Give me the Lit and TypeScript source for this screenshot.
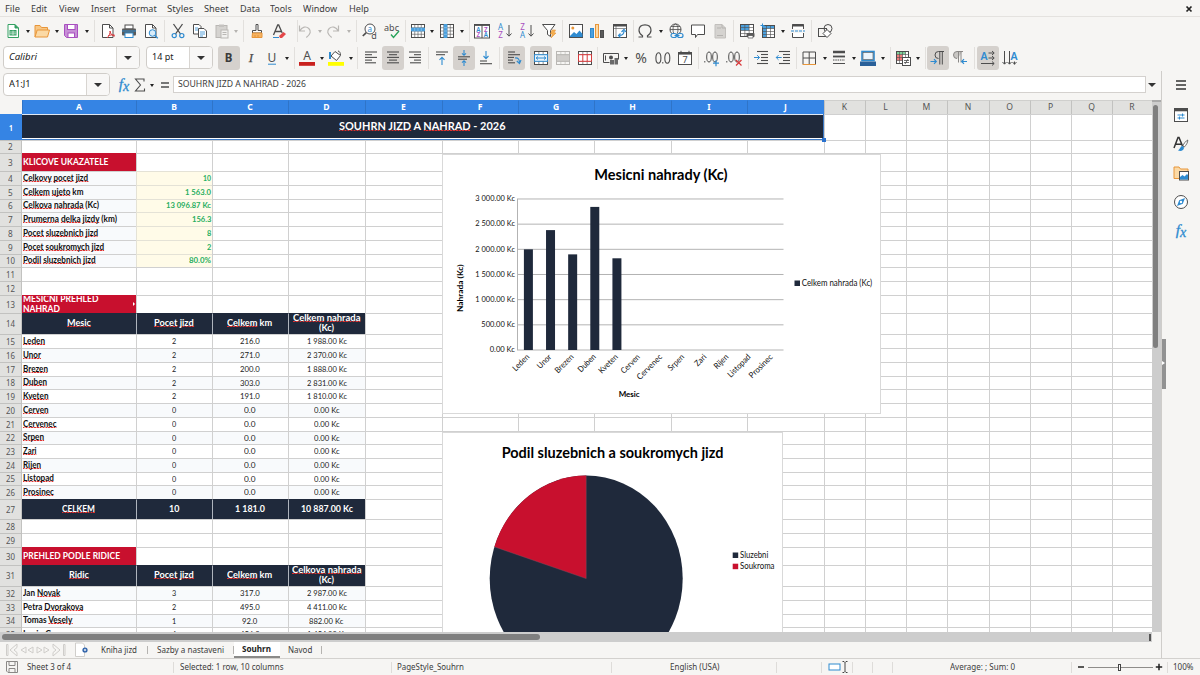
import { LitElement, html, svg, css, nothing, TemplateResult } from "lit";
import { customElement, property } from "lit/decorators.js";

/* One line of text squeezed or stretched to a given width. "~" marks a misspelled word. */
@customElement("fit-text")
class FitText extends LitElement {
  @property() text = "";
  @property({ type: Number }) w = 0;
  static styles = css`
    :host { display: inline-block; white-space: pre; flex: none; }
    .in { display: inline-block; transform-origin: 0 50%; }
    .bad { background: repeating-linear-gradient(90deg, #e0312f 0 1.500px, rgba(224, 49, 47, 0.45) 1.500px 3px) 0 calc(50% + 0.46em) / 100% 1px no-repeat; }
  `;
  firstUpdated() {
    const el = this.renderRoot.querySelector(".in") as HTMLElement;
    const n = el.getBoundingClientRect().width;
    this.style.width = this.w + "px";
    if (n && this.w) el.style.transform = `scaleX(${this.w / n})`;
  }
  render() {
    const words = this.text.split(" ");
    return html`<span class="in">${words.map((s, i) => html`${i ? " " : ""}${s[0] === "~" ? html`<span class="bad">${s.slice(1)}</span>` : s}`)}</span>`;
  }
}

const D = "#4d4d4d", B = "#2f8bd0", O = "#e8963a", P = "#a94fc0", G = "#b9b7b4", R = "#d8383a";
const grid = (x: number, y: number, w: number, h: number, n: number, m: number, c = D) => svg`
  <rect x=${x} y=${y} width=${w} height=${h} fill="none" stroke=${c}/>
  ${Array.from({ length: n - 1 }, (_, i) => svg`<path d=${`M${x + (w / n) * (i + 1)} ${y}v${h}`} stroke=${c} stroke-width=".6"/>`)}
  ${Array.from({ length: m - 1 }, (_, i) => svg`<path d=${`M${x} ${y + (h / m) * (i + 1)}h${w}`} stroke=${c} stroke-width=".6"/>`)}`;
const white = svg`<rect x="1.500" y="1.500" width="13" height="13" fill="#fff"/>`;
const lines = (ys: number[][], c = D) => svg`${ys.map(([y, a, b]) => svg`<path d=${`M${a} ${y}H${b}`} stroke=${c} stroke-width="1.1"/>`)}`;
const ch = (t: string, x: number, y: number, s: number, c = D, extra = "") =>
  svg`<text x=${x} y=${y} font-size=${s} fill=${c} text-anchor="middle" style=${"font-family:'Noto Sans',sans-serif;" + extra}>${t}</text>`;
const fx = svg`<text x="8" y="12.200" font-size="15.500" fill="#2f8bd0" stroke="#2f8bd0" stroke-width=".3" text-anchor="middle" style="font-family:'Liberation Serif',serif;font-style:italic">f<tspan dy="1.500" font-size="14">x</tspan></text>`;

const icons: Record<string, TemplateResult> = {
  new: svg`<path d="M3 1.5h7l3.5 3.500v9.500h-10.500z" fill="#fff" stroke="#35a063"/><path d="M10 1.500v3.500h3.500" fill="#35a063" stroke="#35a063"/><rect x="4.500" y="7" width="7" height="5.500" fill="#35a063"/><path d="M5 9h6M5 10.800h6M8 7.500v4.500" stroke="#fff" stroke-width=".6"/>`,
  open: svg`<path d="M1 14V2.500h5l1.500 2h6V7" fill="#f8c784" stroke=${O}/><path d="M1 14L3.200 7h12.300L13.500 14z" fill="#fbd9a5" stroke=${O}/>`,
  save: svg`<path d="M1.500 1.500h13v13h-11l-2-2z" fill="#c78fd6" stroke=${P}/><rect x="4.500" y="1.500" width="7.500" height="5" fill="#fff" stroke=${P}/><rect x="5" y="10" width="6.500" height="4.500" fill="#fff" stroke=${P}/>`,
  pdf: svg`<path d="M2.500 1.500h7l3.500 3.500v9.500h-10.500z" fill="#fff" stroke=${D}/><path d="M9.500 1.500v3.500h3.500" fill="none" stroke=${D}/><path d="M7 15c2-2 3.500-5 3-7M10 8c.5 3 2 5 5 5M8 13c2-1 4-1.500 6.500-1" fill="none" stroke=${R}/>`,
  print: svg`<rect x="4" y="2" width="8" height="4" fill="#fff" stroke=${D}/><rect x="1" y="5.500" width="14" height="7" rx="1" fill="#5a5a5a"/><path d="M1 8h14" stroke=${B}/><rect x="4" y="10" width="8" height="4.500" fill="#fff" stroke=${B}/>`,
  preview: svg`<path d="M2.500 1.500h7l3.500 3.500v9.500h-10.500z" fill="#fff" stroke=${D}/><path d="M9.500 1.500v3.500h3.500" fill="none" stroke=${D}/><circle cx="9.500" cy="10" r="3.300" fill="#d9ecf9" stroke=${B}/><path d="M11.800 12.500l3 2.800" stroke=${B} stroke-width="1.400"/>`,
  cut: svg`<path d="M3.500 1l7 10M12.500 1l-7 10" stroke=${D} stroke-width="1.300"/><circle cx="4.200" cy="12.600" r="2.100" fill="none" stroke=${B} stroke-width="1.200"/><circle cx="11.800" cy="12.600" r="2.100" fill="none" stroke=${B} stroke-width="1.200"/>`,
  copy: svg`<path d="M1.500 1.500h5.500l2 2v7.500h-7.500z" fill="#fff" stroke=${D}/><path d="M6.500 5.500h5.500l2.500 2.500v6.500h-8z" fill="#fff" stroke=${D}/><path d="M3 5h3M3 7h3M8 9h5M8 11h5M8 13h3" stroke=${B} stroke-width=".8"/>`,
  paste: svg`<rect x="2" y="2.500" width="11" height="12" fill="#d5d3d0" stroke=${G}/><rect x="5" y="1.500" width="5" height="2.500" fill="#c4c2bf"/><rect x="7" y="7" width="7" height="8" fill="#f2f1ef" stroke=${G}/><path d="M8.500 9.500h4M8.500 11.500h4" stroke=${G}/>`,
  clone: svg`<path d="M7 1.500h2v6h3.500v2.500h-9V7.500H7z" fill="#fff" stroke=${D}/><path d="M3.500 10h9.500v4.500H3z" fill="#f5b363" stroke=${O}/><path d="M6 14v-2M9 14v-2" stroke=${O}/>`,
  clear: svg`<path d="M2.500 12L6.700 2h1l3.500 8M4 8.500h6" fill="none" stroke=${D} stroke-width="1.300"/><path d="M2 14.500h6" stroke=${B}/><path d="M8 13l4.500-4 2.500 2-4 4H9z" fill="#e4484a"/>`,
  undo: svg`<path d="M2.500 2.500v5.500h5.500M2.800 8c2-4.500 6.500-5 9-2.500s2 5.500-2.500 9" fill="none" stroke=${G} stroke-width="1.200"/>`,
  redo: svg`<path d="M13.500 2.500v5.500h-5.500M13.200 8c-2-4.500-6.500-5-9-2.500s-2 5.500 2.500 9" fill="none" stroke=${G} stroke-width="1.200"/>`,
  find: svg`<circle cx="8" cy="6" r="5" fill="#fff" stroke=${D}/><path d="M4.300 9.600L.8 13" stroke=${D} stroke-width="1.700"/>${ch("a", 7.800, 8.500, 8, B)}${ch("d", 12, 15.500, 9)}`,
  spell: svg`${ch("abc", 7.500, 7.500, 9)}<path d="M7 11.500l2.500 3L15 8" fill="none" stroke="#27a35a" stroke-width="1.400"/>`,
  row: svg`${white}${grid(1.5, 1.5, 13, 13, 4, 4)}<rect x="1" y="4.700" width="14" height="3.600" fill="#4a9fdc"/><path d="M4.700 4.700v3.600M8 4.700v3.600M11.300 4.700v3.600" stroke="#9fd0f2" stroke-width=".6"/>`,
  col: svg`${white}${grid(1.5, 1.5, 13, 13, 4, 4)}<rect x="4.700" y="1" width="3.600" height="14" fill="#4a9fdc"/><path d="M4.700 4.700h3.600M4.700 8h3.600M4.700 11.300h3.600" stroke="#9fd0f2" stroke-width=".6"/>`,
  sort: svg`<rect x=".5" y="1.500" width="15" height="13.500" fill="#fff" stroke=${D}/><path d="M.5 2h15" stroke=${D} stroke-width="1.800"/><path d="M8 2v13" stroke=${D}/>${ch("A", 4.300, 8.600, 6.200, B, "font-weight:600")}${ch("Z", 4.300, 14.300, 6.200, P, "font-weight:600")}${ch("Z", 11.800, 8.600, 6.200, P, "font-weight:600")}${ch("A", 11.800, 14.300, 6.200, B, "font-weight:600")}`,
  asc: svg`${ch("A", 3.500, 7, 8, B)}${ch("Z", 3.500, 15, 8, P)}<path d="M12 2v11M9.500 10.500L12 13.200l2.500-2.700" fill="none" stroke=${D}/>`,
  desc: svg`${ch("Z", 3.500, 7, 8, P)}${ch("A", 3.500, 15, 8, B)}<path d="M12 2v11M9.500 10.500L12 13.200l2.500-2.700" fill="none" stroke=${D}/>`,
  filter: svg`<path d="M1.500 1.500h12.500L9.500 7.500v6l-3-2v-4z" fill="#fff" stroke=${D}/><path d="M11 7h3.500l-1.500 3h2l-5 5 1.500-4H9.500z" fill="#f5b04f" stroke=${O} stroke-width=".6"/>`,
  image: svg`<rect x="1.500" y="1.500" width="13" height="13" fill="#fff" stroke=${D}/><circle cx="4.800" cy="5" r="1.500" fill=${O}/><path d="M2 13l4-4 2.500 2 3-3.500 3 3.500v3H2z" fill=${B}/>`,
  chart: svg`<rect x="1.500" y="5.500" width="3" height="9" fill="#4ca0de" stroke=${B}/><rect x="6.500" y="1.500" width="3" height="13" fill="#fbd9a5" stroke=${O}/><rect x="11.500" y="7.500" width="3" height="7" fill="#5a5a5a" stroke=${D}/>`,
  pivot: svg`<rect x="1.500" y="1.500" width="13" height="13" fill="#fff" stroke=${D}/><path d="M1.500 2.500h13" stroke=${D} stroke-width="2"/><path d="M4 2v12.500M1.500 5.500h13" stroke=${D} stroke-width=".6"/><path d="M12 8c0 3-2 4.500-5 4.500M9.500 9L12 6.500l2 2.500M8.500 10.500L6.500 12.500l2 2" fill="none" stroke=${B} stroke-width="1.200"/>`,
  omega: svg`<path d="M1.500 14h4v-1.300C3.200 11.300 2 9.500 2 7.300 2 3.800 4.500 1.800 8 1.800s6 2 6 5.500c0 2.200-1.200 4-3.500 5.400V14h4" fill="none" stroke=${D} stroke-width="1.200"/>`,
  link: svg`<circle cx="7.500" cy="6.500" r="5.500" fill="none" stroke=${D}/><ellipse cx="7.500" cy="6.500" rx="2.500" ry="5.500" fill="none" stroke=${D} stroke-width=".8"/><path d="M2 6.500h11M3 3.500h9" stroke=${D} stroke-width=".8"/><rect x="3" y="10.500" width="5.500" height="4" rx="2" fill="#f5f4f2" stroke=${B} stroke-width="1.200"/><rect x="9.500" y="10.500" width="5.500" height="4" rx="2" fill="#f5f4f2" stroke=${B} stroke-width="1.200"/><path d="M6.500 12.500h5" stroke=${B}/>`,
  comment: svg`<path d="M1.500 2h13v9.500H7.500L5.500 14.500v-3h-4z" fill="#fff" stroke=${D}/>`,
  hf: svg`<path d="M3 1.500h7l3.500 3.500v10H3z" fill="#d5d3d0" stroke="#c2c0bd"/><path d="M10 1.500V5h3.500M5 5h4M5 12.500h6" fill="none" stroke="#b5b3b0"/>`,
  parea: svg`<rect x="1.500" y="1.500" width="13" height="12" fill="#fff"/><rect x="1" y="1" width="9" height="6.500" fill="#4a9fdc"/>${grid(1.5, 1.5, 13, 12, 3, 4)}<rect x="7.500" y="10" width="8" height="4" rx=".8" fill="#5a5a5a"/><path d="M9 12.500h5v2.500H9z" fill="#fff" stroke=${D} stroke-width=".7"/>`,
  freeze: svg`<rect x="2.500" y="2.500" width="12" height="12" fill="#fff"/><rect x="2" y="2" width="13" height="3.500" fill="#4a9fdc"/><rect x="2" y="2" width="4.500" height="13" fill="#4a9fdc"/>${grid(2.5, 2.5, 12, 12, 3, 4)}<path d="M.5 2.500h4M2.500.5v4" stroke=${B}/>`,
  split: svg`<path d="M2.500 6V1.500h11V6M2.500 10v4.500h11V10" fill="#fff" stroke=${D}/><path d="M2 2.500h12" stroke=${D} stroke-width="2"/><path d="M1 8h14" stroke=${B} stroke-dasharray="3 1"/>`,
  shapes: svg`<rect x="1.500" y="5.500" width="8" height="8" fill="none" stroke=${D}/><circle cx="11" cy="5.500" r="4" fill="none" stroke=${D}/><path d="M10 6.500l4 4-4 4-4-4z" fill="#fff" stroke=${D}/>`,
  bold: svg`${ch("B", 7.500, 12, 11.500, "#3a3a3a", "font-weight:700")}`,
  italic: svg`<text x="8" y="12" font-size="13" fill=${D} stroke=${D} stroke-width=".25" text-anchor="middle" style="font-family:'Liberation Serif',serif;font-style:italic">I</text>`,
  under: svg`${ch("U", 8, 11.500, 12)}<path d="M4 14.200h8" stroke=${B}/>`,
  fcolor: svg`${ch("A", 8, 10.300, 12)}<rect x="0" y="12" width="16" height="3.800" fill="#c9211e"/>`,
  fill: svg`<rect x="0" y="12" width="16" height="3.800" fill="#ffff00"/><path d="M3 6l4-4.500 5.500 4-4 5z" fill="#fff" stroke=${D}/><path d="M2 2v7" stroke=${B} stroke-width="2"/><path d="M10 1c1.500 0 2.500 2 2.500 4" fill="none" stroke=${D}/>`,
  left: lines([[2, 2, 14], [4.700, 2, 9], [7.400, 2, 14], [10.100, 2, 9], [12.800, 2, 13]]),
  center: lines([[2, 2, 14], [4.700, 4, 12], [7.400, 2, 14], [10.100, 4, 12], [12.800, 2, 14]]),
  right: lines([[2, 2, 14], [4.700, 7, 14], [7.400, 2, 14], [10.100, 7, 14], [12.800, 3, 14]]),
  top: svg`${lines([[2, 2, 14], [4.700, 2, 11]])}<path d="M8 15V7.500M5.500 9.800L8 7.200l2.500 2.600" fill="none" stroke=${B} stroke-width="1.100"/>`,
  mid: svg`${lines([[6.800, 2, 14], [9.200, 2, 11]])}<path d="M8 0v5M6 3.300l2 2 2-2M8 16v-5M6 12.700l2-2 2 2" fill="none" stroke=${B} stroke-width="1.100"/>`,
  bot: svg`${lines([[11, 2, 9], [13.700, 2, 14]])}<path d="M8 1v7.500M5.500 6L8 8.600 10.500 6" fill="none" stroke=${B} stroke-width="1.100"/>`,
  wrap: svg`${lines([[2, 2, 9], [4.700, 2, 14], [7.400, 2, 8], [10.100, 2, 7], [12.800, 2, 9]])}<path d="M9 8c3-.5 4.500 1.500 4.500 4.500M10.800 11l2.700 2.500 1.500-3.500" fill="none" stroke=${B} stroke-width="1.100"/>`,
  merge: svg`${white}${grid(1.5, 1.5, 13, 13, 3, 4)}<rect x="1.500" y="4.700" width="13" height="6.600" fill="#e7f3fc" stroke=${B}/><path d="M3 8h10M5 6.500L3.200 8 5 9.500M11 6.500L12.800 8 11 9.500" fill="none" stroke=${B}/>`,
  merge2: svg`${grid(1.5, 1.5, 13, 13, 3, 4, G)}<rect x="1.500" y="4.700" width="13" height="6.600" fill="#d0cecb" stroke=${G}/>`,
  unmerge: svg`${white}${grid(1.5, 1.5, 13, 13, 3, 4)}<path d="M1.500 4.700h13v6.600h-13zM5.800 4.700v6.600M10.200 4.700v6.600" fill="#fff" stroke=${R}/>`,
  money: svg`<path d="M.5 3.500h15v6M.5 3.500v9h6" fill="none" stroke=${D}/><circle cx="8" cy="7.500" r="2" fill=${D}/><path d="M7 10h4v4.500H7zM11.500 8h3.500v6.500h-3.500z" fill="#6a6a6a"/><path d="M2.500 5.500v5" stroke=${D}/>`,
  pct: svg`${ch("%", 8, 12.800, 14, D)}`,
  num: svg`<g fill="none" stroke=${D} stroke-width="1.100"><ellipse cx="3.400" cy="8" rx="2.500" ry="5.200"/><ellipse cx="12.300" cy="8" rx="2.500" ry="5.200"/></g><path d="M7.800 12v1.500" stroke=${D}/>`,
  date: svg`<rect x="1.500" y="2.500" width="13" height="12" fill="#fff" stroke=${D}/><path d="M1.500 3.500h13" stroke=${D} stroke-width="2.200"/><path d="M4 .8v2M12 .8v2" stroke=${D}/>${ch("7", 8, 13, 9)}`,
  add: svg`<g fill="none" stroke=${D}><ellipse cx="5" cy="7" rx="2.300" ry="5"/><ellipse cx="11" cy="7" rx="2.300" ry="5"/></g><path d="M.8 11v1.500" stroke=${D}/><path d="M12 10.200v6M9 13.200h6" stroke=${B} stroke-width="1.200"/>`,
  del: svg`<g fill="none" stroke=${D}><ellipse cx="5" cy="7" rx="2.300" ry="5"/><ellipse cx="11" cy="7" rx="2.300" ry="5"/></g><path d="M.8 11v1.500" stroke=${D}/><path d="M10 10l5.500 5.500M15.500 10L10 15.500" stroke=${R} stroke-width="1.200"/>`,
  indent: svg`${lines([[1.500, 4, 15], [4.500, 8, 15], [7.500, 8, 15], [10.500, 8, 15], [13.500, 4, 15]])}<path d="M1 7.500h5.500M4.200 5.200l2.300 2.300-2.300 2.300" fill="none" stroke=${B}/>`,
  outdent: svg`${lines([[1.500, 4, 15], [4.500, 8, 15], [7.500, 8, 15], [10.500, 8, 15], [13.500, 4, 15]])}<path d="M1.200 7.500h5.500M3.500 5.200L1.200 7.500l2.300 2.300" fill="none" stroke=${B}/>`,
  borders: svg`<path d="M2 2h12.500v12M2 2v12M8.200 2v12M2 8h12.500" fill="none" stroke=${D}/><path d="M1.500 14.500h13.500" stroke=${O}/>`,
  lstyle: svg`<path d="M2 2h12" stroke=${D} stroke-width="2.500"/><path d="M2 6.500h12" stroke=${D} stroke-width="1.800"/><path d="M2 10h12" stroke=${D} stroke-dasharray="1.500 .8"/><path d="M2 13.500h12" stroke=${D}/>`,
  bcolor: svg`<rect x="2" y="1.500" width="12" height="9" fill="#eaf4fc" stroke=${B} stroke-width="1.600"/><rect x="3" y="2.500" width="10" height="7" fill="none" stroke=${D} stroke-width=".6"/><rect x="0" y="11.500" width="16" height="4.500" fill="#2a6099"/>`,
  cond: svg`<rect x="1.500" y="1.500" width="12" height="12" fill="#fff"/><rect x="1.500" y="1.500" width="9" height="3" fill="#7fd09a"/><rect x="1.500" y="4.500" width="6" height="6" fill="#f07c7c"/>${grid(1.5, 1.5, 12, 12, 4, 4)}<rect x="7.500" y="7.500" width="8" height="8" fill="#fff" stroke=${D}/><path d="M9 10.500h5M9 12.500h5M13 9l-3 5" stroke=${D} stroke-width=".8"/>`,
  ltr: svg`<path d="M14 1.500H8.500a3.500 3.500 0 0 0 0 7M9.800 1.500v13M12.300 1.500v13" fill="none" stroke=${D}/><path d="M.5 11.500h5.500M4 9.200l2.300 2.300L4 13.800" fill="none" stroke=${B} stroke-width="1.200"/>`,
  rtl: svg`<path d="M10 1.500H5a3.500 3.500 0 0 0 0 7h1z" fill="#c9c7c4"/><path d="M11 1.500H5a3.500 3.500 0 0 0 0 7M6.500 1.500v11M9 1.500v11" fill="none" stroke="#8a8886"/><path d="M9.500 11.500H15M12 9.200l-2.300 2.300 2.300 2.300" fill="none" stroke=${B} stroke-width="1.200"/>`,
  tdir: svg`${ch("A", 4, 10, 10.500, B, "font-weight:600")}<path d="M8.500 3h5.500M8.500 8h5.500M1 13.500h13M12 1l2.200 2L12 5M12 6l2.200 2L12 10M12 11.500l2.200 2-2.200 2" fill="none" stroke=${D}/>`,
  vert: svg`${ch("A", 12, 10, 10.500, B, "font-weight:600")}<path d="M2.500 1v13M7.500 1v13M12.500 11.500v3M.5 12l2 2.200 2-2.200M5.500 12l2 2.200 2-2.200M10.500 12l2 2.200 2-2.200" fill="none" stroke=${D}/>`,
  fx,
  sigma: svg`<path d="M12 4.500V2H3.500L8.500 8l-5 6H12.500v-2.500" fill="none" stroke=${D} stroke-width="1.100"/>`,
  equal: svg`<path d="M4 6h8M4 10h8" stroke=${D} stroke-width="1.500"/>`,
  burger: svg`<path d="M3 4h10M3 8h10M3 12h10" stroke="#333" stroke-width="1.300"/>`,
  props: svg`<rect x="1.500" y="1.500" width="13" height="13" fill="#fff" stroke=${D}/><path d="M1.500 3h13" stroke=${D} stroke-width="2.600"/><path d="M4.500 8h7M4.500 11h7M9.500 6.500v3M6.500 9.500v3" stroke=${B}/>`,
  styles: svg`<path d="M1 12L5 1.500h1L9.500 10M2.500 8.300h6" fill="none" stroke="#333" stroke-width="1.500"/><path d="M14.800 4c-2 1-4 3.500-5 6l1.500 1c2-2 3.500-4.500 3.500-7z" fill="#fff" stroke=${D} stroke-width=".8"/><path d="M9.500 10c-2 0-2 2.500-4.500 4.500 3 1 6 0 6-3z" fill=${B}/>`,
  gallery: svg`<path d="M1 13.500V2h5l1.500 2h7.500v9.500z" fill="#fbd9a5" stroke=${O}/><rect x="6.500" y="6.500" width="9" height="8.500" fill="#fff" stroke=${D}/><path d="M7 14.500V12l2.500-2 2 1.500L14 9l1 1v4.500z" fill=${B}/>`,
  nav: svg`<circle cx="8" cy="8" r="6.500" fill="#fff" stroke=${D}/><path d="M12 4l-2.200 5.800L4 12l2.200-5.800z" fill=${B}/><circle cx="8" cy="8" r="1.200" fill="#fff"/>`,
  addsheet: svg`<path d="M1.500 1h7l2 2v11.500h-9z" fill="#fff" stroke="#d0cecb"/><circle cx="11" cy="8" r="2.600" fill="#2a5fa8"/><path d="M9.800 8h2.400M11 6.800v2.400" stroke="#fff" stroke-width=".9"/>`,
  disk: svg`<path d="M2.500 2.500h11v11h-9.500l-1.500-1.500z" fill="none" stroke="#8a8886"/><path d="M5 2.500v4h6v-4M5 13.500v-4h6v4" fill="none" stroke="#8a8886"/>`,
  selbox: svg`<rect x="2" y="5" width="11" height="6" fill="#fff" stroke=${B}/>`,
  ibeam: svg`<path d="M5.500 2.500h1.500l1 1 1-1h1.500M8 3.500v9M5.500 13.500h1.500l1-1 1 1h1.500" fill="none" stroke="#333" stroke-width=".9"/>`,
  minus: svg`<path d="M5 8h6" stroke="#222" stroke-width="1.500"/>`,
  plus: svg`<path d="M4.800 8h6.400M8 4.800v6.400" stroke="#222" stroke-width="1.500"/>`,
  close: svg`<path d="M5.500 5.500l5 5M10.500 5.500l-5 5" stroke="#222" stroke-width="1.700"/>`,
};
const icon = (n: string) => html`<svg width="16" height="16" viewBox="0 0 16 16">${icons[n]}</svg>`;

type Item = { x: number; w: number; t: unknown; cls?: string };
const ic = (n: string, cx: number): Item => ({ x: cx - 8, w: 16, t: icon(n) });
const on = (n: string, cx: number): Item => ({ x: cx - 11, w: 22, t: icon(n), cls: "on" });
const ca = (cx: number, off = false): Item => ({ x: cx - 2.5, w: 5, t: html`<i class="caret ${off ? "off" : ""}"></i>` });
const big = (cx: number): Item => ({ x: cx - 4, w: 8, t: html`<i class="caret big"></i>` });
const se = (cx: number): Item => ({ x: cx - 0.5, w: 1, t: nothing, cls: "sep" });
const tx = (s: string, x: number, w: number): Item => ({ x, w, t: html`<fit-text .text=${s} .w=${w}></fit-text>` });
const strip = (items: Item[]) => {
  let end = 0;
  return items.map((i) => {
    const m = i.x - end;
    end = i.x + i.w;
    return html`<div class="item ${i.cls ?? ""}" style="margin-left:${m}px;width:${i.w}px">${i.t}</div>`;
  });
};

const menu = strip([
  tx("File", 5.3, 15), tx("Edit", 31.3, 16), tx("View", 58.8, 20.4), tx("Insert", 90.7, 24.5), tx("Format", 125.7, 30.7), tx("Styles", 166.7, 26.3),
  tx("Sheet", 204.2, 24.5), tx("Data", 239.7, 20), tx("Tools", 270.5, 21.7), tx("Window", 303.3, 34.2), tx("Help", 348.7, 20), ic("close", 1189.3),
]);
const bar1 = strip([
  ic("new", 12.5), ca(27.5), ic("open", 41.5), ca(57), ic("save", 71), ca(86.5), se(94), ic("pdf", 107.5), ic("print", 129), ic("preview", 151), se(164.5),
  ic("cut", 178), ic("copy", 200), ic("paste", 222), ca(236, true), se(243), ic("clone", 256.5), ic("clear", 278.5), se(297), ic("undo", 304.8), ca(319.5, true),
  ic("redo", 333), ca(349, true), se(356), ic("find", 370), ic("spell", 391.5), se(405), ic("row", 417.8), ca(432.5), ic("col", 447), ca(462), se(469.5),
  ic("sort", 482.3), ic("asc", 505), ic("desc", 527), ic("filter", 549), se(562.5), ic("image", 575.7), ic("chart", 597.5), ic("pivot", 620), se(633.5),
  ic("omega", 645.5), ca(661), ic("link", 676.5), ic("comment", 698.3), ic("hf", 720), se(733.5), ic("parea", 747), ic("freeze", 767.7), ca(783), ic("split", 798.5), se(812), ic("shapes", 825.5),
]);
const bar2 = strip([
  { x: 3, w: 136.5, cls: "combo", t: html`<div class="field ital"><fit-text .text=${"Calibri"} .w=${28}></fit-text></div><div class="drop"><i class="caret big"></i></div>` },
  { x: 145.5, w: 67, cls: "combo", t: html`<div class="field"><fit-text .text=${"14 pt"} .w=${21.5}></fit-text></div><div class="drop"><i class="caret big"></i></div>` },
  on("bold", 229), ic("italic", 251), ic("under", 272), ca(287), se(294), ic("fcolor", 306.5), ca(321.5), ic("fill", 335.8), ca(351), se(358),
  ic("left", 371.5), on("center", 393.5), ic("right", 415.5), se(429), ic("top", 442.5), on("mid", 464.5), ic("bot", 486.5), se(500), on("wrap", 513.7), on("merge", 541),
  ic("merge2", 563), ic("unmerge", 585), se(598), ic("money", 611), ca(626), ic("pct", 641.3), ic("num", 663.3), ic("date", 685.5), se(699), ic("add", 712), ic("del", 734.5), se(748.5),
  ic("indent", 761.5), ic("outdent", 783.5), se(797), ic("borders", 809.3), ca(825), ic("lstyle", 839), ca(854), ic("bcolor", 868), ca(883.5), se(890.5), ic("cond", 903), ca(918), se(925.5),
  on("ltr", 938.5), ic("rtl", 960.5), se(974.5), on("tdir", 988), ic("vert", 1009.7),
]);
const formula = strip([
  { x: 3, w: 107, cls: "combo", t: html`<div class="field"><fit-text .text=${"A1:J1"} .w=${21.5}></fit-text></div><div class="drop"><i class="caret big"></i></div>` },
  ic("fx", 124), ic("sigma", 140), ca(152), ic("equal", 165),
  { x: 173, w: 973, cls: "input", t: html`<fit-text .text=${"SOUHRN JIZD A NAHRAD - 2026"} .w=${128}></fit-text>` },
  big(1152),
]);
const status = strip([
  ic("disk", 12), tx("Sheet 3 of 4", 27.2, 44), se(173.5), tx("Selected: 1 row, 10 columns", 180, 103.5), se(391.5), tx("PageStyle_Souhrn", 397.3, 67), se(612), tx("English (USA)", 670.3, 49.5),
  se(776.5), se(821.5), ic("selbox", 835), { x: 843, w: 5, t: icon("ibeam") }, se(852.5), se(872.5), se(892.5), tx("Average: ; Sum: 0", 950.5, 65), se(1071.5),
  { x: 1077, w: 8, t: icon("minus") }, { x: 1088, w: 65, cls: "slider", t: html`<b></b>` }, { x: 1155.5, w: 8, t: icon("plus") }, se(1167.5), tx("100%", 1173, 20.5),
]);
const tabs = strip([
  { x: 5, w: 62, t: html`<svg width="62" height="16" viewBox="0 0 62 16" fill="none" stroke="#cfcdca"><path d="M1.500 2.500h1.500v11H1.500zM12 2L5 8l7 6v-3.500L9 8l3-2.500zM21 5l-5 3 5 3zM28 5l-5 3 5 3zM32 5l5 3-5 3zM39 5l5 3-5 3zM48 2l7 6-7 6v-3.500L51 8l-3-2.500zM58.500 2.500h1.500v11h-1.500z"/></svg>` },
  ic("addsheet", 81.5), tx("Kniha jizd", 101.3, 36), se(147.5), tx("Sazby a nastaveni", 157, 67), se(233.5),
  { x: 234, w: 46, cls: "tab", t: html`<fit-text .text=${"Souhrn"} .w=${29}></fit-text>` }, tx("Navod", 288.3, 24.3), se(321.5),
]);

const colX = [22, 136, 212, 288, 365, 442, 518, 594, 671, 747, 824, 865, 906, 947, 989, 1030, 1071, 1112, 1152];
const rowY = [114, 140, 153, 171, 185, 199, 212, 226, 240, 254, 267, 281, 295, 313, 334, 348, 362, 376, 389, 403, 417, 431, 444, 458, 472, 485, 499, 519, 533, 547, 565, 586, 600, 614, 627, 641];

type Cell = { cls: string; lines: [string, number][] };
const cells: Record<string, Cell> = {};
const put = (ref: string, cls: string, ...l: [string, number][]) => { cells[ref] = { cls, lines: l }; };
put("A3", "red", ["KLICOVE UKAZATELE", 85.5]);
([["~Celkovy ~pocet ~jizd", 65, "10", 8], ["~Celkem ~ujeto km", 60.5, "1 563.0", 26], ["~Celkova ~nahrada (Kc)", 76, "13 096.87 Kc", 45], ["~Prumerna ~delka ~jizdy (km)", 94, "156.3", 19.5],
  ["~Pocet ~sluzebnich ~jizd", 75, "8", 4.3], ["~Pocet ~soukromych ~jizd", 81, "2", 4.3], ["~Podil ~sluzebnich ~jizd", 72.5, "80.0%", 22]] as [string, number, string, number][])
  .forEach(([a, w, b, v], i) => { put("A" + (4 + i), "label tint", [a, w]); put("B" + (4 + i), "kpi", [b, v]); });
put("A13", "red more", ["MESICNI PREHLED", 75.5], ["NAHRAD", 37]);
const head = (r: number, a: [string, number], d: [string, number]) => {
  put("A" + r, "navy", a); put("B" + r, "navy sp", ["~Pocet ~jizd", 39.7]); put("C" + r, "navy sp", ["~Celkem km", 45.2]); put("D" + r, "navy sp", d, ["(Kc)", 15]);
};
head(14, ["~Mesic", 24], ["~Celkem ~nahrada", 67.5]);
([["Leden", 22, "2", "216.0", "1 988.00 Kc"], ["Unor", 18, "2", "271.0", "2 370.00 Kc"], ["Brezen", 25, "2", "200.0", "1 888.00 Kc"], ["Duben", 24, "2", "303.0", "2 831.00 Kc"], ["Kveten", 25.5, "2", "191.0", "1 810.00 Kc"],
  ["Cerven", 25.5, "0", "0.0", "0.00 Kc"], ["Cervenec", 33.5, "0", "0.0", "0.00 Kc"], ["Srpen", 21, "0", "0.0", "0.00 Kc"], ["Zari", 13.5, "0", "0.0", "0.00 Kc"], ["Rijen", 18, "0", "0.0", "0.00 Kc"],
  ["Listopad", 31, "0", "0.0", "0.00 Kc"], ["Prosinec", 31, "0", "0.0", "0.00 Kc"]] as [string, number, string, string, string][])
  .forEach(([n, w, b, c, d], i) => data(15 + i, "~" + n, w, b, c, d, i % 2 ? "tint" : ""));
put("A27", "navy tot", ["~CELKEM", 33]); put("B27", "navy sp tot", ["10", 10.3]); put("C27", "navy sp tot", ["1 181.0", 30]); put("D27", "navy sp tot", ["10 887.00 Kc", 52]);
put("A30", "red", ["PREHLED PODLE RIDICE", 97]);
head(31, ["~Ridic", 20], ["~Celkova ~nahrada", 69.5]);
([["Jan ~Novak", 37.3, "3", "317.0", "2 987.00 Kc"], ["Petra ~Dvorakova", 60.3, "2", "495.0", "4 411.00 Kc"], ["Tomas ~Vesely", 49.3, "1", "92.0", "882.00 Kc"], ["Lucie Cerna", 45, "4", "456.0", "1 454.00 Kc"]] as [string, number, string, string, string][])
  .forEach(([n, w, b, c, d], i) => data(32 + i, n, w, b, c, d, i % 2 ? "" : "tint"));
function data(r: number, n: string, w: number, b: string, c: string, d: string, tint: string) {
  put("A" + r, "label " + tint, [n, w]);
  put("B" + r, "num " + tint, [b, 4.2]);
  put("C" + r, "num " + tint, [c, c.length === 5 ? 19.8 : c.length === 4 ? 15.3 : 11.5]);
  put("D" + r, "num " + tint, [d, d.length === 11 ? 40 : d.length === 9 ? 34.3 : 25.7]);
}

@customElement("bar-chart")
class BarChart extends LitElement {
  static styles = css`
    :host { display: block; height: 100%; }
    svg { display: block; font-family: Lato, "Liberation Sans", sans-serif; }
  `;
  render() {
    const vals: [string, number, number][] = [["Leden", 1988, 20], ["Unor", 2370, 16.5], ["Brezen", 1888, 23], ["Duben", 2831, 21.5], ["Kveten", 1810, 23.5], ["Cerven", 0, 23.5], ["Cervenec", 0, 32], ["Srpen", 0, 19.5], ["Zari", 0, 13], ["Rijen", 0, 17], ["Listopad", 0, 29], ["Prosinec", 0, 30]];
    const ys: [string, number][] = [["0.00 Kc", 25.3], ["500.00 Kc", 33.7], ["1 000.00 Kc", 39.7], ["1 500.00 Kc", 39.7], ["2 000.00 Kc", 39.7], ["2 500.00 Kc", 39.7], ["3 000.00 Kc", 39.7]];
    return html`<svg width="437" height="258" viewBox="443 155 437 258">
      <text x="594.300" y="179.700" font-size="15" font-weight="700" textLength="133.300" lengthAdjust="spacingAndGlyphs">Mesicni nahrady (Kc)</text>
      ${ys.map(([t, w], i) => svg`<path d=${`M517 ${350 - i * 25.17}H783.500`} stroke="#b3b3b3"/>
        <text x=${515 - w} y=${352.3 - i * 25.17} font-size="8.300" fill="#111" textLength=${w} lengthAdjust="spacingAndGlyphs">${t}</text>`)}
      <path d="M517.500 199V350" stroke="#b3b3b3"/>
      ${vals.map(([t, v, w], i) => {
        const cx = 528.4 + i * 22.13;
        const h = (v * 151) / 3000 + 0.6;
        return svg`${v ? svg`<rect x=${cx - 4.5} y=${350 - h} width="9" height=${h} fill="#1f293b"/>` : nothing}
          <text transform=${`translate(${cx + 1.5} ${357.5}) rotate(-45)`} x=${-w} font-size="8.200" fill="#111" textLength=${w} lengthAdjust="spacingAndGlyphs">${t}</text>`;
      })}
      <text transform="translate(463 312) rotate(-90)" font-size="7.900" font-weight="700" textLength="47.500" lengthAdjust="spacingAndGlyphs">Nahrada (Kc)</text>
      <text x="618.700" y="397" font-size="8.200" font-weight="700" textLength="21" lengthAdjust="spacingAndGlyphs">Mesic</text>
      <rect x="794.500" y="280.500" width="5.500" height="5.500" fill="#1f293b"/>
      <text x="801.700" y="286" font-size="8.600" fill="#111" textLength="70.500" lengthAdjust="spacingAndGlyphs">Celkem nahrada (Kc)</text>
    </svg>`;
  }
}

@customElement("pie-chart")
class PieChart extends LitElement {
  static styles = css`
    :host { display: block; height: 100%; }
    svg { display: block; font-family: Lato, "Liberation Sans", sans-serif; }
  `;
  render() {
    return html`<svg width="339" height="199" viewBox="443 433 339 199">
      <text x="501.700" y="457.500" font-size="15.300" font-weight="700" textLength="221.800" lengthAdjust="spacingAndGlyphs">Podil sluzebnich a soukromych jizd</text>
      <ellipse cx="586.200" cy="578.600" rx="96.500" ry="103" fill="#1f293b"/>
      <path d="M586.200 578.600L494.400 546.800A96.500 103 0 0 1 586.200 475.600z" fill="#c8102e"/>
      <path d="M494.400 546.800L586.200 578.600V475.600" fill="none" stroke="#8d5566" stroke-width=".4"/>
      <rect x="732.700" y="552.500" width="5.500" height="5.500" fill="#1f293b"/>
      <rect x="732.700" y="563.700" width="5.500" height="5.500" fill="#c8102e"/>
      <text x="740" y="558" font-size="8.600" fill="#111" textLength="28.300" lengthAdjust="spacingAndGlyphs">Sluzebni</text>
      <text x="740" y="569.200" font-size="8.600" fill="#111" textLength="34.500" lengthAdjust="spacingAndGlyphs">Soukroma</text>
    </svg>`;
  }
}

@customElement("app-root")
class AppRoot extends LitElement {
  static styles = css`
    :host { display: flex; flex-direction: column; width: 1200px; height: 675px; overflow: hidden; background: #f6f5f3; color: #3c3c3c; font: 9.300px/12px "Noto Sans", "Open Sans", sans-serif; }
    * { box-sizing: border-box; }
    svg { flex: none; display: block; overflow: visible; }
    .strip { display: flex; align-items: center; flex: none; }
    .item { flex: none; display: flex; align-items: center; justify-content: center; }
    .sep { height: 22px; background: #e2e0dd; }
    .on { height: 24px; background: #d5d1cd; border-radius: 3px; }
    .caret { border: 2.5px solid transparent; border-top: 3px solid #222; border-bottom: 0; margin-top: 1px; }
    .caret.off { border-top-color: #b5b3b0; }
    .caret.big { border-width: 4px 4px 0; border-top-color: #333; margin-top: 0; }
    .menu { height: 17px; border-bottom: 1px solid #e4e2df; padding-top: 1px; }
    .bar { height: 27px; }
    .combo { height: 23px; background: #fff; border: 1px solid #d0cdc9; border-radius: 4px; justify-content: flex-start; align-items: stretch; color: #222; overflow: hidden; }
    .field { flex: 1; display: flex; align-items: center; padding: 0 0 1px 5px; }
    .ital { font-style: italic; }
    .drop { width: 23px; background: #f8f7f6; border-left: 1px solid #d8d5d1; display: flex; align-items: center; justify-content: center; }
    .body { display: flex; flex: 1; min-height: 0; }
    .left { width: 1161px; flex: none; display: flex; flex-direction: column; }
    .fbar { height: 29px; padding-bottom: 2px; }
    .input { height: 17px; background: #fff; border: 1px solid #d4d1ce; justify-content: flex-start; padding: 0 0 1px 3.500px; }
    .work { display: flex; height: 532px; }
    .sheet { position: relative; width: 1152px; overflow: hidden; background: #fff; flex: none; }
    .cols, .row { display: flex; }
    .cols { height: 14px; background: #e1e1df; }
    .ch { flex: none; border-left: 1px solid #c2c2c0; border-top: 1px solid #cfcfcd; padding: 0 1px 1px 0; display: flex; align-items: center; justify-content: center; font-size: 8.6px; color: #555; }
    .ch.sel { background: #3584e4; color: #fff; font-weight: 700; border-color: #2f74c8; border-top-color: #3584e4; }
    .corner { width: 22px; background: #f6f5f3; flex: none; }
    .rh { width: 22px; flex: none; background: #e1e1df; border-top: 1px solid #c2c2c0; border-right: 1px solid #c2c2c0; display: flex; align-items: center; justify-content: center; color: #555; }
    .rh.sel { background: #3584e4; color: #fff; font-weight: 700; border-color: #3584e4; }
    .c { flex: none; border-top: 1px solid #d0d0d0; border-left: 1px solid #d0d0d0; padding: 0 1px 1px 0; font-family: Lato, "Liberation Sans", sans-serif; font-size: 8.200px; line-height: 10px; display: flex; flex-direction: column; justify-content: center; align-items: center; overflow: hidden; }
    .c.first { border-left: 0; padding-left: 0.500px; }
    .label { align-items: flex-start; font-weight: 700; font-size: 8.500px; color: #111; }
    .tint { background: #f8fafc; }
    .num { color: #1a1a1a; }
    .kpi { background: #fffbe8; color: #27ae60; font-weight: 700; font-size: 8.300px; align-items: flex-end; padding-right: 1px; border-color: #e4e2d6; }
    .kpi, .label { padding-bottom: 2px; }
    .red { background: #c8102e; color: #fff; font-weight: 700; font-size: 8.500px; align-items: flex-start; border-color: #c8102e !important; padding-bottom: 2px; position: relative; }
    .more::after { content: ""; position: absolute; right: 1px; top: 6px; border: 2.500px solid transparent; border-left: 2.500px solid #fff; border-right: 0; }
    .navy { background: #1f293b; color: #fff; font-weight: 700; font-size: 8.700px; border-color: #1f293b !important; padding-bottom: 1.500px; }
    .navy.sp { border-left-color: #aeb4bd !important; }
    .tot { font-size: 9.600px; padding-bottom: 2px; }
    .title { width: 802px; flex: none; background: #1f293b; color: #fff; font: 700 11px/14px Lato, "Liberation Sans", sans-serif; display: flex; align-items: center; justify-content: center; border-top: 1px solid #dfe8f4; border-bottom: 1px solid #3b78c4; box-shadow: inset 0 -1px #fff; padding: 0 1.500px 1.500px 0; }
    .handle { position: absolute; left: 822px; top: 38px; width: 4px; height: 4px; background: #2a72cf; }
    .edge { position: absolute; left: 823px; top: 14px; width: 1px; height: 25px; background: #3b78c4; }
    .obj { position: absolute; left: 442px; background: #fff; border: 1px solid #d9d9d9; }
    .obj.one { top: 54px; width: 439px; height: 260px; }
    .obj.two { top: 332px; width: 341px; height: 260px; }
    .vscroll { flex: 1; background: #cdcdcd; border-top: 2px solid #aaa; padding: 3px 3px 0 2px; }
    .vthumb { height: 243px; width: 5px; margin-left: -1px; border-radius: 3px; background: #7f7f7f; }
    .hscroll { width: 1152px; height: 10px; background: #cdcdcd; display: flex; align-items: center; justify-content: space-between; padding: 0 1.500px 0 2px; }
    .hthumb { width: 538px; height: 5.500px; border-radius: 3px; background: #7f7f7f; }
    .tick { width: 2px; height: 7px; background: #555; }
    .tabs { height: 16px; font-size: 8.900px; padding-bottom: 1px; }
    .tabs .sep { height: 8px; background: #b5b3b0; }
    .tab { align-self: stretch; margin-bottom: -1px; background: #fff; border-bottom: 2px solid #8a8a88; font-weight: 700; color: #222; }
    .side { flex: 1; border-left: 1px solid #cfcdca; display: flex; flex-direction: column; align-items: center; padding: 6px 0 0 0; position: relative; }
    .side svg { margin-bottom: 13px; }
    .side svg:first-child { margin-bottom: 14px; }
    .grip { position: absolute; left: 0; top: 268px; width: 4px; height: 50px; background: #929292; }
    .grip::after { content: ""; position: absolute; left: 0; top: 22px; border: 2.500px solid transparent; border-left: 3px solid #fff; border-right: 0; }
    .status { height: 17px; border-top: 1px solid #d3d1ce; font-size: 8.700px; }
    .status .sep { height: 11px; background: #dedcd9; }
    .slider { height: 1px; background: #8f8d8a; }
    .slider b { width: 3px; height: 7px; background: #fff; border: 1px solid #444; margin-left: -2px; flex: none; }
  `;

  row(i: number) {
    const r = i + 1;
    const h = rowY[i + 1] - rowY[i];
    const hw = r === 1 ? 3.8 : r < 10 ? 4.7 : 9;
    return html`<div class="row" style="height:${h}px">
      <div class="rh ${r === 1 ? "sel" : ""}"><fit-text .text=${String(r)} .w=${hw}></fit-text></div>
      ${r === 1 ? html`<div class="title"><fit-text .text=${"~SOUHRN ~JIZD A ~NAHRAD - 2026"} .w=${166.5}></fit-text></div>` : nothing}
      ${colX.slice(0, -1).map((x, k) => {
        if (r === 1 && k < 10) return nothing;
        const c = cells["ABCDEFGHIJKLMNOPQR"[k] + r];
        return html`<div class="c ${k === 0 ? "first" : ""} ${c?.cls ?? ""}" style="width:${colX[k + 1] - x}px">${c?.lines.map(([t, w]) => html`<fit-text .text=${t} .w=${w}></fit-text>`)}</div>`;
      })}
    </div>`;
  }

  render() {
    return html`
      <div class="strip menu">${menu}</div>
      <div class="strip bar">${bar1}</div>
      <div class="strip bar">${bar2}</div>
      <div class="body">
        <div class="left">
          <div class="strip fbar">${formula}</div>
          <div class="work">
            <div class="sheet">
              <div class="cols"><div class="corner"></div>${colX.slice(0, -1).map((x, k) => html`<div class="ch ${k < 10 ? "sel" : ""}" style="width:${colX[k + 1] - x}px">${"ABCDEFGHIJKLMNOPQR"[k]}</div>`)}</div>
              ${rowY.slice(0, -1).map((_, i) => this.row(i))}
              <div class="edge"></div><div class="handle"></div>
              <div class="obj one"><bar-chart></bar-chart></div>
              <div class="obj two"><pie-chart></pie-chart></div>
            </div>
            <div class="vscroll"><div class="vthumb"></div></div>
          </div>
          <div class="hscroll"><div class="hthumb"></div><div class="tick"></div></div>
          <div class="strip tabs">${tabs}</div>
        </div>
        <div class="side">
          ${["burger", "props", "styles", "gallery", "nav", "fx"].map(icon)}
          <div class="grip"></div>
        </div>
      </div>
      <div class="strip status">${status}</div>`;
  }
}
